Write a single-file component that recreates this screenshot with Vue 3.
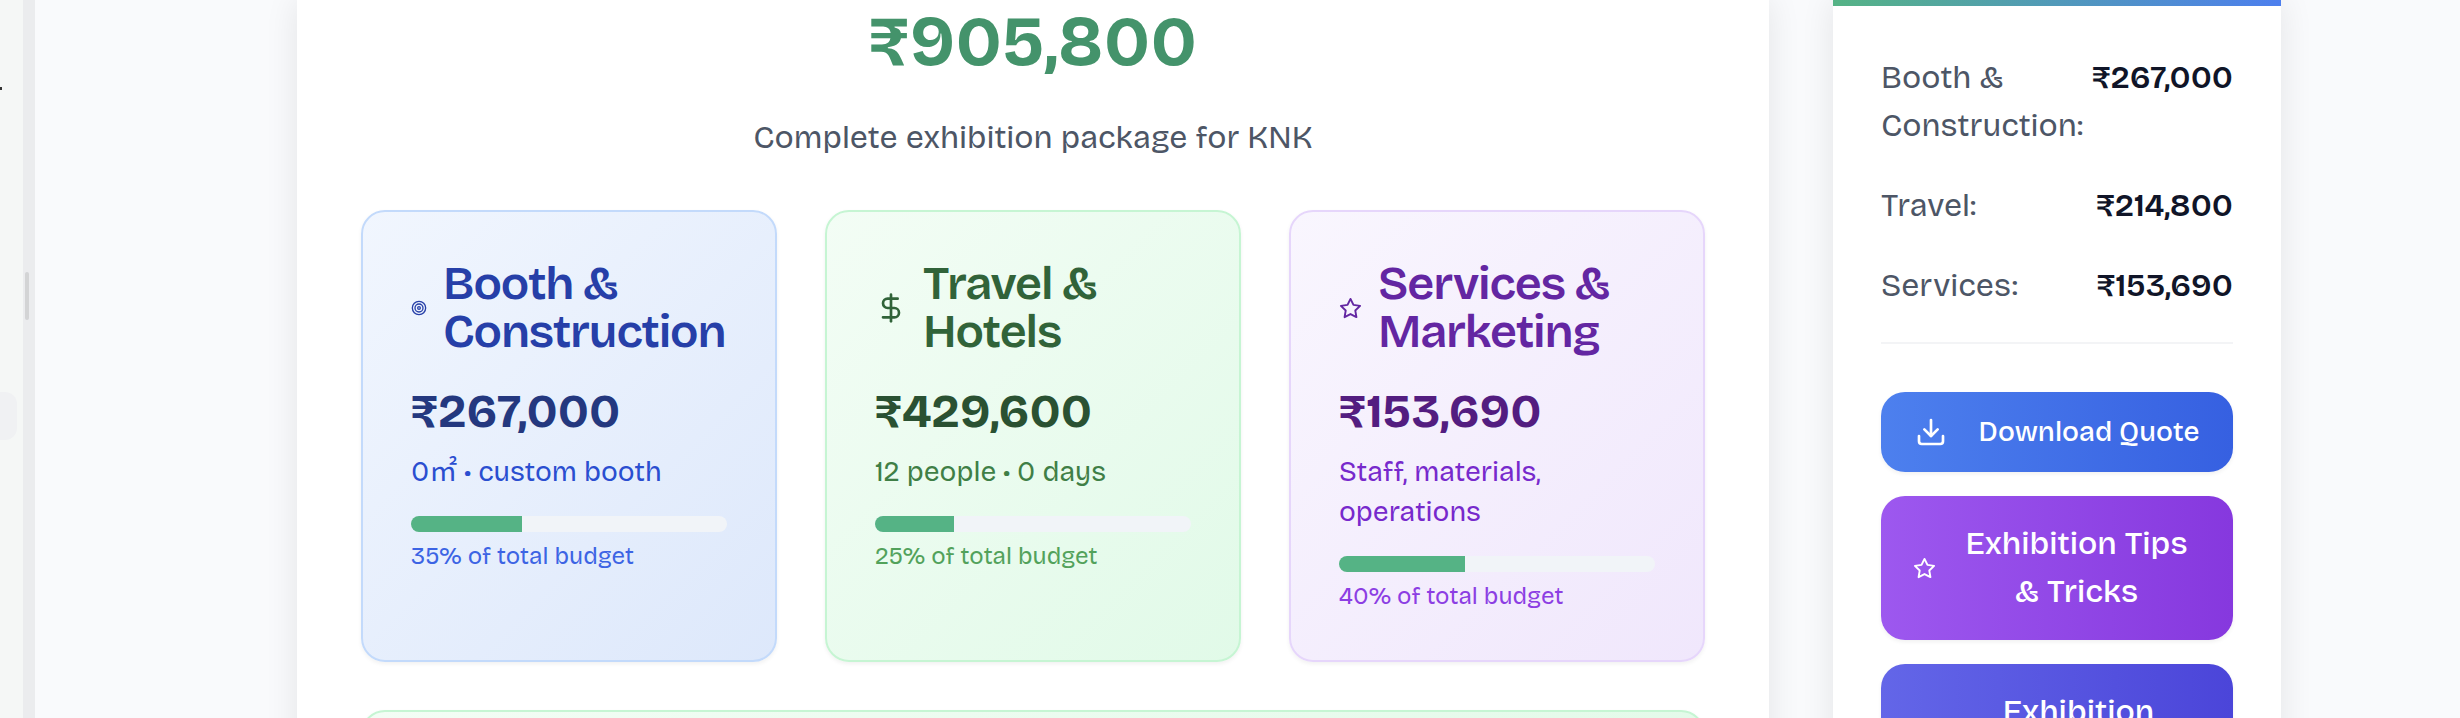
<script setup>
const packages = [
  {
    tone: 'blue',
    icon: 'target',
    title: ['Booth &', 'Construction'],
    amount: '₹267,000',
    detail: '0㎡ • custom booth',
    share: 35
  },
  {
    tone: 'green',
    icon: 'dollar',
    title: ['Travel &', 'Hotels'],
    amount: '₹429,600',
    detail: '12 people • 0 days',
    share: 25
  },
  {
    tone: 'purple',
    icon: 'star',
    title: ['Services &', 'Marketing'],
    amount: '₹153,690',
    detail: 'Staff, materials, operations',
    share: 40
  }
]

const summary = [
  { label: 'Booth & Construction:', amount: '₹267,000' },
  { label: 'Travel:', amount: '₹214,800' },
  { label: 'Services:', amount: '₹153,690' }
]
</script>

<template>
  <div class="page">
    <aside class="sidebar">
      <span class="sidebar-mark"></span>
      <span class="sidebar-item"></span>
    </aside>
    <div class="divider"><span class="thumb"></span></div>

    <main class="content">
      <section class="panel budget">
        <p class="total">₹905,800</p>
        <p class="subtitle">Complete exhibition package for KNK</p>

        <div class="cards">
          <article v-for="p in packages" :key="p.tone" class="card" :class="p.tone">
            <div class="card-head">
              <svg v-if="p.icon === 'target'" class="icon icon-target" viewBox="0 0 24 24">
                <circle cx="12" cy="12" r="10" />
                <circle cx="12" cy="12" r="6" />
                <circle cx="12" cy="12" r="2" />
              </svg>
              <svg v-else-if="p.icon === 'dollar'" class="icon icon-dollar" viewBox="0 0 24 24">
                <path d="M12 2v20" />
                <path d="M17 5H9.5a3.5 3.5 0 0 0 0 7h5a3.5 3.5 0 0 1 0 7H6" />
              </svg>
              <svg v-else class="icon icon-star" viewBox="0 0 24 24">
                <path d="M12 2l3.09 6.26L22 9.27l-5 4.87 1.18 6.88L12 17.77l-6.18 3.25L7 14.14 2 9.27l6.91-1.01L12 2z" />
              </svg>
              <h3>{{ p.title[0] }}<br />{{ p.title[1] }}</h3>
            </div>
            <p class="amount">{{ p.amount }}</p>
            <p class="detail">{{ p.detail }}</p>
            <div class="track"><div class="fill" :style="{ width: p.share + '%' }"></div></div>
            <p class="share">{{ p.share }}% of total budget</p>
          </article>
        </div>

        <div class="card green wide"></div>
      </section>

      <aside class="panel quote">
        <div class="accent"></div>
        <div class="quote-body">
          <dl class="summary">
            <div v-for="s in summary" :key="s.label" class="row">
              <dt>{{ s.label }}</dt>
              <dd>{{ s.amount }}</dd>
            </div>
          </dl>
          <div class="actions">
            <button type="button" class="action download">
              <svg class="icon icon-download" viewBox="0 0 24 24">
                <path d="M21 15v4a2 2 0 0 1-2 2H5a2 2 0 0 1-2-2v-4" />
                <path d="M7 10l5 5 5-5" />
                <path d="M12 15V3" />
              </svg>
              <span>Download Quote</span>
            </button>
            <button type="button" class="action tips">
              <svg class="icon icon-star" viewBox="0 0 24 24">
                <path d="M12 2l3.09 6.26L22 9.27l-5 4.87 1.18 6.88L12 17.77l-6.18 3.25L7 14.14 2 9.27l6.91-1.01L12 2z" />
              </svg>
              <span>Exhibition Tips<br />&amp; Tricks</span>
            </button>
            <button type="button" class="action more"><span>Exhibition</span></button>
          </div>
        </div>
      </aside>
    </main>
  </div>
</template>

<style>
body {
  margin: 0;
}
</style>

<style scoped>
.page {
  display: flex;
  height: 100vh;
  overflow: hidden;
  background: #f9fafc;
  font-family: 'Bricolage Grotesque', Inter, 'Noto Sans CJK SC', sans-serif;
  font-size: 32px;
  line-height: 48px;
}

p,
h3,
dl,
dd {
  margin: 0;
}

.sidebar {
  flex: none;
  width: 23px;
  box-sizing: border-box;
  padding-top: 87px;
  background: #f5f7f6;
}

.sidebar-mark {
  display: block;
  width: 2px;
  height: 3px;
  background: #333333;
}

.sidebar-item {
  display: block;
  width: 17px;
  height: 48px;
  margin-top: 302px;
  border-radius: 0 12px 12px 0;
  background: #f0f1f3;
}

.divider {
  flex: none;
  width: 12px;
  box-sizing: border-box;
  padding: 272px 0 0 2px;
  background: #ebecee;
}

.thumb {
  display: block;
  width: 4px;
  height: 48px;
  border-radius: 2px;
  background: #d3d4d5;
}

.content {
  flex: 1;
  display: grid;
  grid-template-columns: repeat(4, minmax(0, 1fr));
  gap: 64px;
  padding: 0 179px 0 262px;
}

.panel {
  background: #ffffff;
  box-shadow: 0 0 32px rgba(0, 0, 0, 0.09);
}

.budget {
  grid-column: span 3;
  padding: 0 64px;
}

.total {
  padding-top: 2px;
  color: #44936b;
  font-size: 70px;
  font-weight: 700;
  line-height: 80px;
  text-align: center;
}

.subtitle {
  margin: 32px 0 48px;
  color: #4d5666;
  text-align: center;
}

.cards {
  display: grid;
  grid-template-columns: repeat(3, minmax(0, 1fr));
  gap: 48px;
}

.card {
  padding: 48px;
  border: 2px solid;
  border-radius: 24px;
  box-shadow: 0 2px 4px rgba(0, 0, 0, 0.06);
}

.card.blue {
  border-color: #c3dafb;
  background: linear-gradient(135deg, #f1f6fe, #dde8fb);
}

.card.green {
  border-color: #c6f5d3;
  background: linear-gradient(135deg, #f3fdf5, #e1fae8);
}

.card.purple {
  border-color: #e6d6fb;
  background: linear-gradient(135deg, #f9f6fe, #f0e7fc);
}

.card.wide {
  height: 120px;
  margin-top: 48px;
}

.card-head {
  display: flex;
  align-items: center;
  gap: 16px;
  margin-bottom: 24px;
}

.icon {
  flex: none;
  fill: none;
  stroke: currentColor;
  stroke-width: 2;
  stroke-linecap: round;
  stroke-linejoin: round;
}

.icon-target {
  width: 16px;
  height: 16px;
}

.icon-dollar,
.icon-download {
  width: 32px;
  height: 32px;
}

.icon-star {
  width: 23px;
  height: 23px;
}

h3 {
  font-size: 47px;
  font-weight: 600;
  line-height: 48px;
  letter-spacing: -0.025em;
}

.amount {
  font-size: 47px;
  font-weight: 700;
  line-height: 64px;
}

.detail {
  margin: 8px 0 24px;
  font-size: 28px;
  line-height: 40px;
}

.track {
  height: 16px;
  overflow: hidden;
  border-radius: 8px;
  background: #f1f4f8;
}

.fill {
  height: 100%;
  background: #55b385;
}

.share {
  margin-top: 8px;
  font-size: 24px;
  line-height: 32px;
}

.blue .card-head { color: #263fa8; }
.blue .amount { color: #24387f; }
.blue .detail { color: #2a4ed0; }
.blue .share { color: #3c64e4; }

.green .card-head { color: #316339; }
.green .amount { color: #2a5132; }
.green .detail { color: #3f7f46; }
.green .share { color: #52a25b; }

.purple .card-head { color: #6326a2; }
.purple .amount { color: #531d80; }
.purple .detail { color: #7729cc; }
.purple .share { color: #8c3ee3; }

.accent {
  height: 6px;
  background: linear-gradient(90deg, #55b385, #4d7fee);
}

.quote-body {
  padding: 48px;
}

.summary {
  display: flex;
  flex-direction: column;
  gap: 32px;
  padding-bottom: 32px;
  border-bottom: 2px solid #f3f4f6;
}

.row {
  display: flex;
  justify-content: space-between;
}

dt {
  color: #4d5666;
}

dd {
  color: #101528;
  font-weight: 600;
}

.actions {
  display: flex;
  flex-direction: column;
  gap: 24px;
  margin-top: 48px;
}

.action {
  display: flex;
  align-items: center;
  justify-content: center;
  padding: 24px 32px;
  border: 0;
  border-radius: 24px;
  box-shadow: 0 2px 4px rgba(0, 0, 0, 0.06);
  color: #ffffff;
  font-family: inherit;
  font-size: 32px;
  font-weight: 500;
  line-height: 48px;
  text-align: center;
  white-space: nowrap;
}

.download {
  gap: 32px;
  padding: 20px 32px;
  background: linear-gradient(90deg, #4d80ee, #3660e1);
  font-size: 28px;
  line-height: 40px;
}

.tips {
  gap: 16px;
  background: linear-gradient(90deg, #9d58ef, #8638de);
}

.tips span,
.more span {
  flex: 1;
}

.more {
  height: 144px;
  align-items: flex-start;
  padding-left: 75px;
  background: linear-gradient(90deg, #6366e8, #4b45d9);
}
</style>
